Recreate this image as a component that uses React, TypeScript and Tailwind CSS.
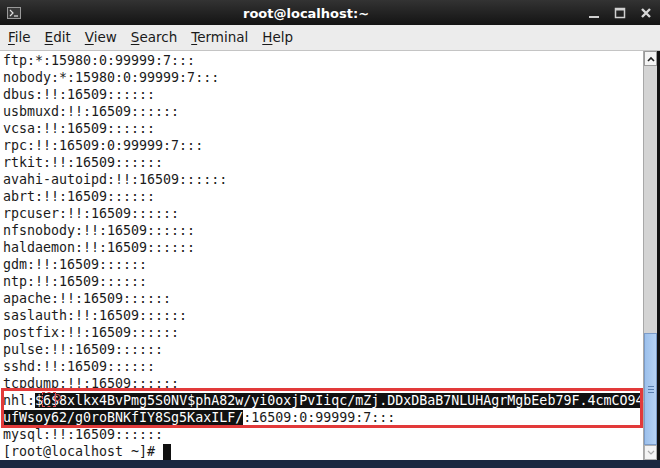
import React from "react";

const lines = [
  "ftp:*:15980:0:99999:7:::",
  "nobody:*:15980:0:99999:7:::",
  "dbus:!!:16509::::::",
  "usbmuxd:!!:16509::::::",
  "vcsa:!!:16509::::::",
  "rpc:!!:16509:0:99999:7:::",
  "rtkit:!!:16509::::::",
  "avahi-autoipd:!!:16509::::::",
  "abrt:!!:16509::::::",
  "rpcuser:!!:16509::::::",
  "nfsnobody:!!:16509::::::",
  "haldaemon:!!:16509::::::",
  "gdm:!!:16509::::::",
  "ntp:!!:16509::::::",
  "apache:!!:16509::::::",
  "saslauth:!!:16509::::::",
  "postfix:!!:16509::::::",
  "pulse:!!:16509::::::",
  "sshd:!!:16509::::::",
  "tcpdump:!!:16509::::::",
];

const menu = ["File", "Edit", "View", "Search", "Terminal", "Help"];

function TermIcon() {
  return (
    <svg width="14" height="12" viewBox="0 0 14 12">
      <rect x="0.5" y="0.5" width="13" height="11" fill="#3a3a3a" stroke="#9a9a9a" />
      <path d="M3 3 L6 6 L3 9" stroke="#e0e0e0" strokeWidth="1.2" fill="none" />
      <path d="M7 9 H11" stroke="#e0e0e0" strokeWidth="1.2" />
    </svg>
  );
}

export default function App() {
  return (
    <div className="w-[660px] h-[468px] overflow-hidden bg-[#1b2740] flex flex-col">
      {/* title bar */}
      <div className="h-[25px] flex items-center bg-gradient-to-b from-[#333333] to-[#141414] relative">
        <div className="ml-[7px] mt-[1px]">
          <TermIcon />
        </div>
        <div className="absolute left-[243px] top-[4px] text-white font-bold text-[13px] font-['DejaVu_Sans',sans-serif]">
          root@localhost:~
        </div>
        <div className="ml-auto mr-[8px] flex items-center gap-[14px] text-[#d8d8d8]">
          <svg width="12" height="12" viewBox="0 0 12 12">
            <path d="M1 10 H11" stroke="#cfcfcf" strokeWidth="2" />
          </svg>
          <svg width="12" height="12" viewBox="0 0 12 12">
            <rect x="1.5" y="1.5" width="9" height="9" fill="none" stroke="#cfcfcf" strokeWidth="1.5" />
            <path d="M1.5 2.5 H10.5" stroke="#cfcfcf" strokeWidth="2" />
          </svg>
          <svg width="12" height="12" viewBox="0 0 12 12">
            <path d="M2 2 L10 10 M10 2 L2 10" stroke="#d8d8d8" strokeWidth="2.4" />
          </svg>
        </div>
      </div>

      {/* menu bar */}
      <div className="h-[26px] bg-[#ececec] border-b border-[#c4c4c4] flex items-center pl-[8px] gap-[14px] text-[13.5px] text-[#1a1a1a] font-['DejaVu_Sans',sans-serif]">
        {menu.map((m) => (
          <span key={m}>
            <span className="underline underline-offset-2">{m[0]}</span>
            {m.slice(1)}
          </span>
        ))}
      </div>

      {/* terminal */}
      <div className="h-[409px] flex bg-white">
        <div className="relative flex-1 pl-[3px] pt-[1px] text-[13.3px] leading-[17px] text-[#1a1a1a] font-['DejaVu_Sans_Mono',monospace] whitespace-pre">
          {lines.map((l, i) => (
            <div key={i}>{l}</div>
          ))}
          <div>
            nhl:<span className="bg-[#111] text-white">$6$8xlkx4BvPmg5S0NV$phA82w/yi0oxjPvIiqc/mZj.DDxDBaB7NLUHAgrMgbEeb79F.4cmCO94</span>
          </div>
          <div>
            <span className="bg-[#111] text-white">ufWsoy62/g0roBNKfIY8Sg5KaxILF/</span>:16509:0:99999:7:::
          </div>
          <div>mysql:!!:16509::::::</div>
          <div className="flex items-center">
            [root@localhost ~]#{" "}
            <span className="inline-block w-[8px] h-[16px] bg-[#111]" />
          </div>

          {/* annotation boxes */}
          <div className="absolute left-[1px] top-[337px] w-[642px] h-[40px] border-[3px] border-[#e23a3a]" />
          <div className="absolute left-[42px] top-[341px] w-[14px] h-[15px] border border-dashed border-[#e05050]" />
          <div className="absolute left-[54px] top-[343px] w-[7px] h-[7px] rounded-full border border-[#e05050]" />
        </div>

        {/* scrollbar */}
        <div className="w-[16px] flex flex-col bg-[#d4d4d4] border-l border-[#a8a8a8]">
          <div className="h-[15px] bg-[#f4f4f4] border border-[#9a9a9a] flex items-center justify-center">
            <svg width="8" height="6" viewBox="0 0 8 6">
              <path d="M1 5 L4 2 L7 5" stroke="#222" strokeWidth="1.6" fill="none" />
            </svg>
          </div>
          <div className="flex-1" />
          <div className="h-[112px] bg-gradient-to-r from-[#9cc0ec] to-[#b6d2f3] border border-[#7c9cc8] flex items-center justify-center">
            <div className="flex flex-col gap-[2px]">
              <div className="w-[6px] h-px bg-[#5a7fb0]" />
              <div className="w-[6px] h-px bg-[#5a7fb0]" />
              <div className="w-[6px] h-px bg-[#5a7fb0]" />
            </div>
          </div>
          <div className="h-[15px] bg-[#f4f4f4] border border-[#b0b0b0] flex items-center justify-center">
            <svg width="8" height="6" viewBox="0 0 8 6">
              <path d="M1 1 L4 4 L7 1" stroke="#aaa" strokeWidth="1.2" fill="none" />
            </svg>
          </div>
        </div>
        <div className="w-[3px] bg-[#111]" />
      </div>
    </div>
  );
}
